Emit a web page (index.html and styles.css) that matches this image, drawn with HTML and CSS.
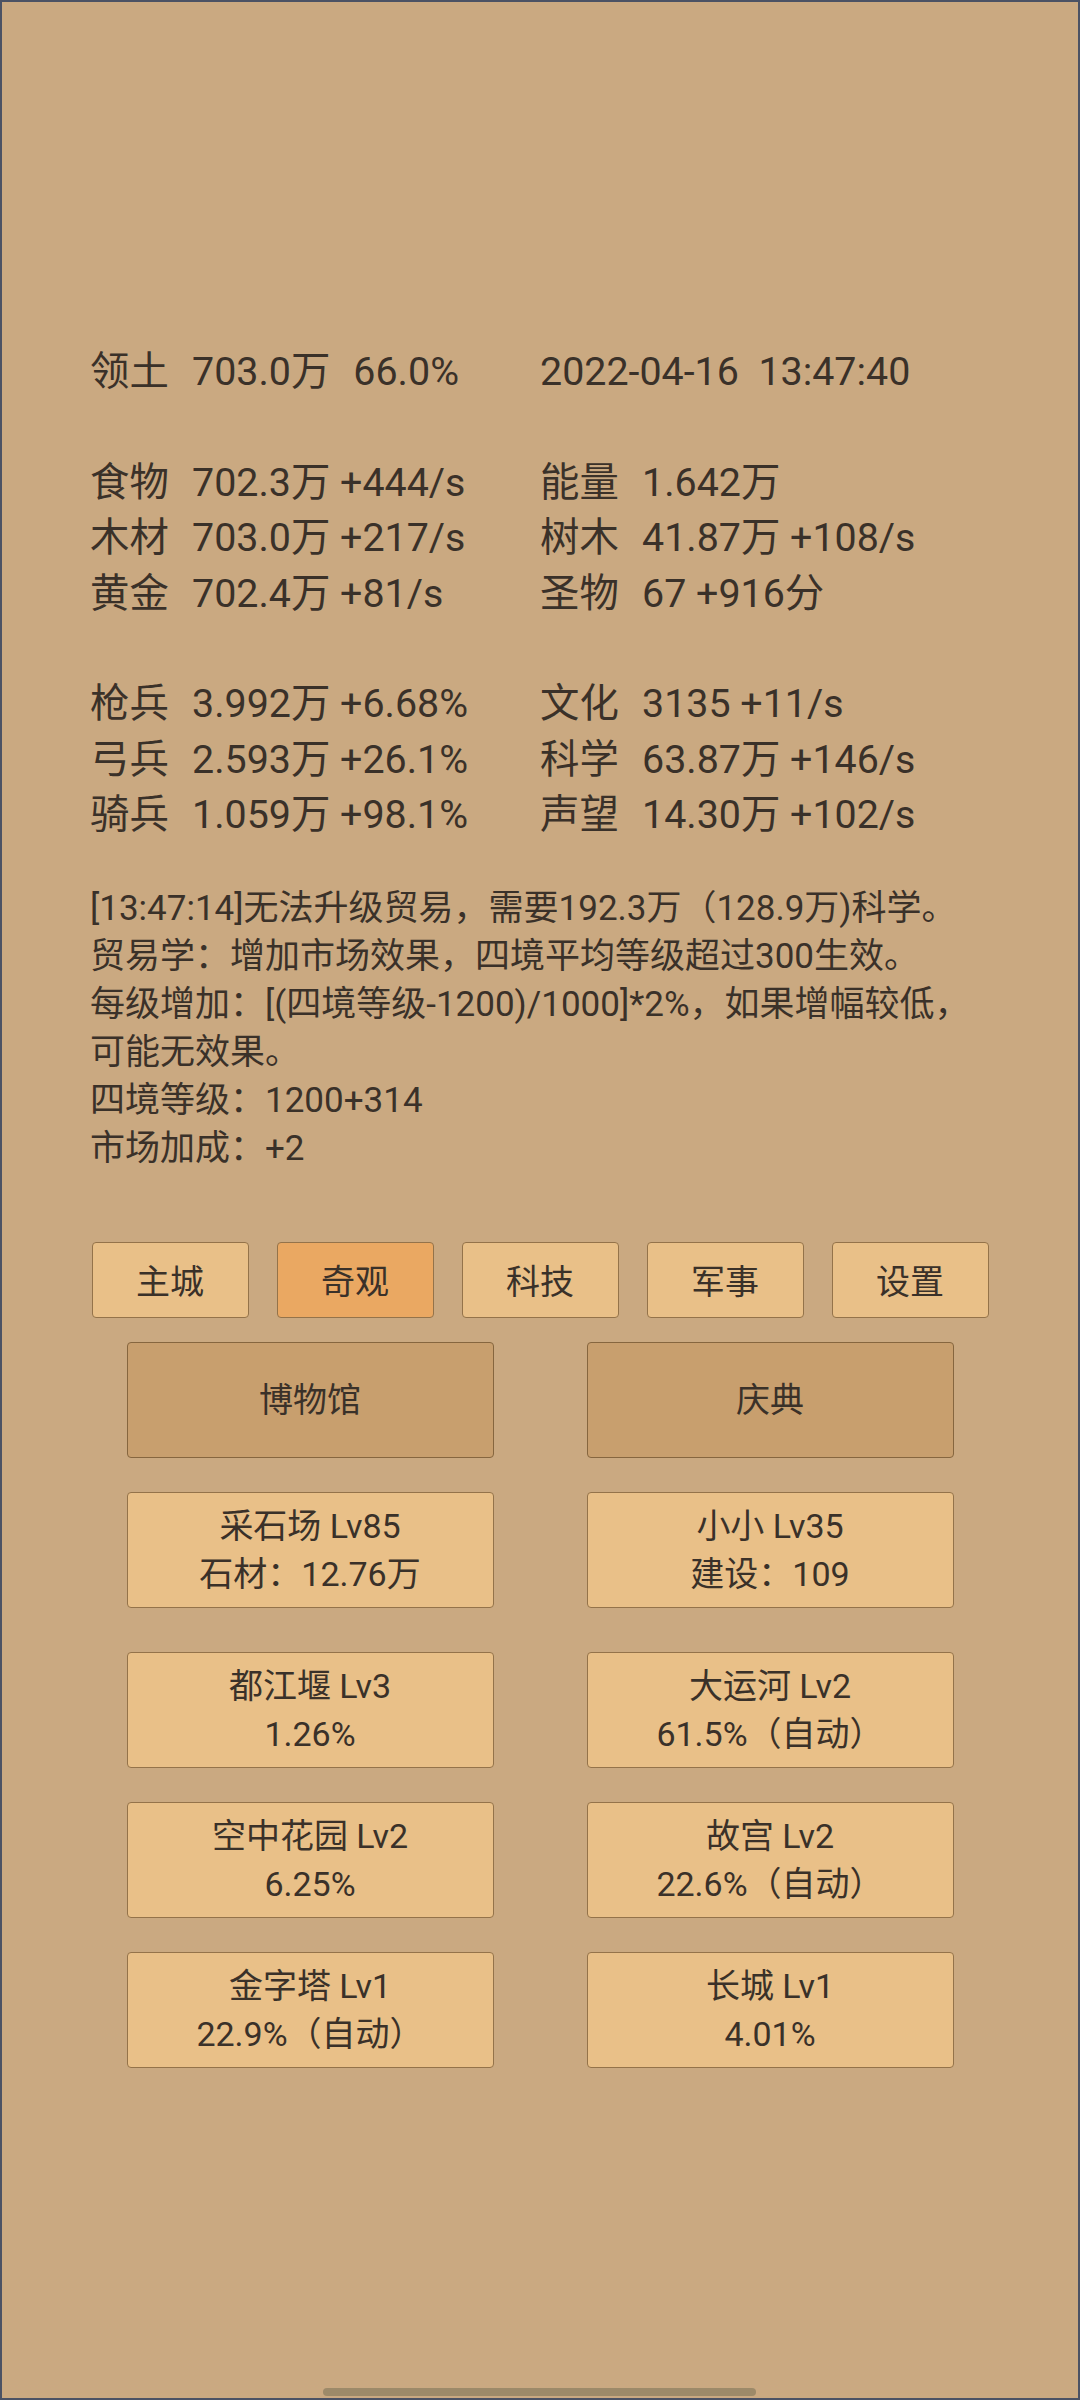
FILE: index.html
```html
<!DOCTYPE html>
<html lang="zh-CN">
<head>
    <meta charset="UTF-8">
    <meta name="viewport" content="width=device-width, initial-scale=1.0">
    <title>四境</title>
    <link rel="stylesheet" href="styles.css">
</head>
<body>
    <div class="screen">
        <!-- Resource overview -->
        <div class="stats">
            <div class="row">
                <div class="cell"><span class="label">领土</span>703.0万<span class="wide">66.0%</span></div>
                <div class="cell">2022-04-16  13:47:40</div>
            </div>
            <div class="row blank"></div>
            <div class="row">
                <div class="cell"><span class="label">食物</span>702.3万 +444/s</div>
                <div class="cell"><span class="label">能量</span>1.642万</div>
            </div>
            <div class="row">
                <div class="cell"><span class="label">木材</span>703.0万 +217/s</div>
                <div class="cell"><span class="label">树木</span>41.87万 +108/s</div>
            </div>
            <div class="row">
                <div class="cell"><span class="label">黄金</span>702.4万 +81/s</div>
                <div class="cell"><span class="label">圣物</span>67 +916分</div>
            </div>
            <div class="row blank"></div>
            <div class="row">
                <div class="cell"><span class="label">枪兵</span>3.992万 +6.68%</div>
                <div class="cell"><span class="label">文化</span>3135 +11/s</div>
            </div>
            <div class="row">
                <div class="cell"><span class="label">弓兵</span>2.593万 +26.1%</div>
                <div class="cell"><span class="label">科学</span>63.87万 +146/s</div>
            </div>
            <div class="row">
                <div class="cell"><span class="label">骑兵</span>1.059万 +98.1%</div>
                <div class="cell"><span class="label">声望</span>14.30万 +102/s</div>
            </div>
        </div>

        <!-- Log message -->
        <div class="message">
            <div>[13:47:14]无法升级贸易，需要192.3万（128.9万)科学。</div>
            <div>贸易学：增加市场效果，四境平均等级超过300生效。</div>
            <div>每级增加：[(四境等级-1200)/1000]*2%，如果增幅较低，<br>可能无效果。</div>
            <div>四境等级：1200+314</div>
            <div>市场加成：+2</div>
        </div>

        <!-- Tabs -->
        <div class="tabs">
            <div class="tab">主城</div>
            <div class="tab active">奇观</div>
            <div class="tab">科技</div>
            <div class="tab">军事</div>
            <div class="tab">设置</div>
        </div>

        <!-- Wonders -->
        <div class="wonder-row">
            <div class="card dark">博物馆</div>
            <div class="card dark">庆典</div>
        </div>
        <div class="wonder-row">
            <div class="card">采石场 Lv85<br>石材：12.76万</div>
            <div class="card">小小 Lv35<br>建设：109</div>
        </div>
        <div class="wonder-row spaced">
            <div class="card">都江堰 Lv3<br>1.26%</div>
            <div class="card">大运河 Lv2<br>61.5%（自动）</div>
        </div>
        <div class="wonder-row">
            <div class="card">空中花园 Lv2<br>6.25%</div>
            <div class="card">故宫 Lv2<br>22.6%（自动）</div>
        </div>
        <div class="wonder-row">
            <div class="card">金字塔 Lv1<br>22.9%（自动）</div>
            <div class="card">长城 Lv1<br>4.01%</div>
        </div>

        <div class="home-bar"></div>
    </div>
</body>
</html>
```

FILE: styles.css
```css
body {
    margin: 0;
    background-color: #4b5264;
    font-family: Roboto, "Noto Sans CJK SC", sans-serif;
    color: #3a3129;
}

.screen {
    position: relative;
    box-sizing: border-box;
    width: 1080px;
    height: 2400px;
    border: 2px solid #4b5264;
    background-color: #caa981;
    padding-top: 342px;
}

/* Resource overview */
.stats {
    font-size: 39.4px;
    padding-left: 88px;
}

.row {
    display: flex;
    height: 55.4px;
    line-height: 55.4px;
    white-space: pre;
}

.cell {
    width: 450px;
}

.label {
    display: inline-block;
    width: 102px;
}

.wide {
    margin-left: 23px;
}

/* Log message */
.message {
    margin-top: 42px;
    padding-left: 88px;
    font-size: 35px;
    line-height: 48px;
    white-space: nowrap;
}

/* Tabs */
.tabs {
    display: flex;
    justify-content: center;
    gap: 28px;
    margin-top: 69px;
}

.tab {
    box-sizing: border-box;
    width: 157px;
    height: 76px;
    display: flex;
    align-items: center;
    justify-content: center;
    font-size: 34px;
    background-color: #e9c088;
    border: 1px solid #94734a;
    border-radius: 4px;
}

.tab.active {
    background-color: #eaa862;
}

/* Wonder cards */
.wonder-row {
    display: flex;
    justify-content: center;
    gap: 93px;
    margin-top: 34px;
}

.tabs + .wonder-row {
    margin-top: 24px;
}

.wonder-row.spaced {
    margin-top: 44px;
}

.card {
    box-sizing: border-box;
    width: 367px;
    height: 116px;
    display: flex;
    align-items: center;
    justify-content: center;
    text-align: center;
    font-size: 34px;
    line-height: 48px;
    background-color: #e9c088;
    border: 1px solid #94734a;
    border-radius: 4px;
}

.card.dark {
    background-color: #c89f6e;
    border-color: #86663f;
}

.home-bar {
    position: absolute;
    left: 321px;
    bottom: 2px;
    width: 433px;
    height: 8px;
    border-radius: 4px;
    background-color: #9d8a69;
}
```
